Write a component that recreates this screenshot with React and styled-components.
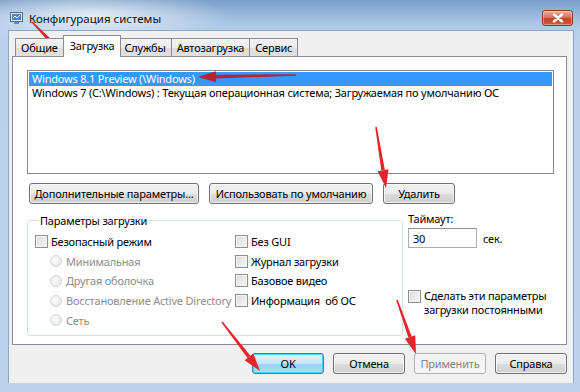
import styled, { createGlobalStyle } from "styled-components"

const GlobalStyle = createGlobalStyle`
    body {
        margin: 0;
        font-family: "Noto Sans", "Open Sans", sans-serif;
        font-size: 11px;
        letter-spacing: -0.2px;
        color: #000;
    }
`

const Window = styled.div`
    position: relative;
    width: 580px;
    height: 392px;
    display: flex;
    flex-direction: column;
    overflow: hidden;
    background:
        radial-gradient(ellipse 140px 26px at 90px 16px, rgba(255, 255, 255, 0.75), rgba(255, 255, 255, 0)),
        linear-gradient(to bottom, #7a9fc9 0, #a9c5e4 22px, #b9d1ea 34px, #bcd3eb 100%);
`

const TitleBar = styled.div`
    height: 30px;
    box-sizing: border-box;
    display: flex;
    align-items: flex-start;
    padding: 11px 7px 0 10px;
    gap: 5px;
`

const Title = styled.div`
    flex: 1;
    font-size: 11.5px;
    letter-spacing: 0;
    line-height: 16px;
    color: #111;
`

const CloseButton = styled.div`
    width: 31px;
    height: 16px;
    margin-top: -1px;
    border: 1px solid #8a3a2c;
    border-radius: 3px;
    box-sizing: border-box;
    display: flex;
    align-items: center;
    justify-content: center;
    background: linear-gradient(to bottom, #eab0a2 0, #d9725e 45%, #c4432c 55%, #cf5a3f 100%);
    box-shadow: inset 0 0 0 1px rgba(255, 255, 255, 0.35);
`

const Client = styled.div`
    flex: 1;
    margin: 0 6px 9px 8px;
    background: #f0f0f0;
    border: 1px solid #8da6c4;
    border-bottom: none;
    padding: 4px 6px 0 3px;
    display: flex;
    flex-direction: column;
`

const TabStrip = styled.div`
    display: flex;
    align-items: flex-end;
    height: 22px;
    padding-left: 3px;
    position: relative;
    z-index: 1;
    margin-bottom: -1px;
`

const Tab = styled.div`
    height: ${p => (p.$active ? "22px" : "19px")};
    padding: 0 ${p => (p.$active ? "6px" : "5px")};
    margin-right: ${p => (p.$active ? "-2px" : "0")};
    margin-left: -1px;
    box-sizing: border-box;
    border: 1px solid #898c95;
    border-bottom: ${p => (p.$active ? "none" : "1px solid #898c95")};
    position: relative;
    z-index: ${p => (p.$active ? 2 : 1)};
    display: flex;
    align-items: ${p => (p.$active ? "flex-start" : "center")};
    padding-top: ${p => (p.$active ? "2px" : "0")};
    background: ${p => (p.$active ? "#fff" : "linear-gradient(to bottom, #f3f3f3, #ebebeb 50%, #dddddd 51%, #e0e0e0)")};
    &:first-child { margin-left: 0; }
`

const TabPanel = styled.div`
    height: 289px;
    box-sizing: border-box;
    border: 1px solid #898c95;
    background: #fff;
    padding: 13px 12px 0 14px;
    display: flex;
    flex-direction: column;
`

const ListBox = styled.div`
    height: 104px;
    box-sizing: border-box;
    border: 1px solid #828790;
    padding: 1px;
`

const ListRow = styled.div`
    height: 14px;
    line-height: 14px;
    padding-left: 3px;
    white-space: nowrap;
    background: ${p => (p.$selected ? "#3399ff" : "transparent")};
    color: ${p => (p.$selected ? "#fff" : "#000")};
`

const ButtonRow = styled.div`
    display: flex;
    gap: 10px;
    margin: 9px 0 0 2px;
`

const Button = styled.div`
    height: 21px;
    width: ${p => p.$w || 72}px;
    box-sizing: border-box;
    display: flex;
    align-items: center;
    justify-content: center;
    border: 1px solid ${p => (p.$focus ? "#3c7fb1" : p.$disabled ? "#adb2b5" : "#707070")};
    border-radius: 3px;
    color: ${p => (p.$disabled ? "#838383" : "#000")};
    white-space: nowrap;
    background: ${p =>
        p.$disabled
            ? "#f4f4f4"
            : p.$focus
            ? "linear-gradient(to bottom, #e5f4fc, #c4e5f6 50%, #98d1ef 51%, #b1dcf3)"
            : "linear-gradient(to bottom, #f2f2f2, #ebebeb 50%, #dddddd 51%, #cfcfcf)"};
    box-shadow: inset 0 0 0 1px ${p => (p.$disabled ? "transparent" : p.$focus ? "#48d2fb" : "rgba(255,255,255,0.7)")};
`

const Options = styled.div`
    display: flex;
    margin-top: 9px;
`

const GroupBox = styled.fieldset`
    width: 376px;
    height: 123px;
    box-sizing: border-box;
    margin: 0;
    padding: 4px 0 0 7px;
    border: 1px solid #d5dfe5;
    border-radius: 3px;
    display: flex;
`

const Legend = styled.legend`
    padding: 0 2px;
    margin-left: 3px;
    line-height: 15px;
`

const Column = styled.div`
    width: ${p => p.$w}px;
    display: flex;
    flex-direction: column;
`

const OptionRow = styled.div`
    height: 19.6px;
    display: flex;
    align-items: center;
    gap: 3px;
    padding-left: ${p => (p.$indent ? "15px" : "0")};
    color: ${p => (p.$disabled ? "#8d8d8d" : "#000")};
    white-space: pre;
`

const Check = styled.span`
    width: 13px;
    height: 13px;
    box-sizing: border-box;
    border: 1px solid #8e8f8f;
    background: linear-gradient(135deg, #dcdcdc, #f6f6f6);
    box-shadow: inset 0 0 0 1px #f4f4f4;
    flex: none;
`

const Radio = styled.span`
    width: 12px;
    height: 12px;
    box-sizing: border-box;
    border-radius: 50%;
    border: 1px solid #d4d4d4;
    background: radial-gradient(circle at 40% 40%, #fbfbfb, #e6e6e6);
    flex: none;
    margin-right: 1px;
`

const RightColumn = styled.div`
    margin-left: 5px;
    display: flex;
    flex-direction: column;
    margin-top: -2px;
`

const TimeoutRow = styled.div`
    display: flex;
    align-items: center;
    gap: 6px;
    margin-top: 2px;
`

const Input = styled.div`
    width: 69px;
    height: 20px;
    box-sizing: border-box;
    border: 1px solid #abadb3;
    border-top-color: #8a8d95;
    padding-left: 4px;
    display: flex;
    align-items: center;
`

const PersistRow = styled.div`
    display: flex;
    align-items: flex-start;
    gap: 3px;
    margin-top: 41px;
    line-height: 14px;
    white-space: nowrap;
    & > span:first-child { margin-top: 1px; }
`

const Footer = styled.div`
    display: flex;
    justify-content: flex-end;
    gap: 9px;
    padding-top: 8px;
`

const Overlay = styled.svg`
    position: absolute;
    left: 0;
    top: 0;
    pointer-events: none;
`

function Arrow({ x1, y1, x2, y2, color = "#e5242a", head = 18, hw = 5.5 }) {
    const dx = x2 - x1
    const dy = y2 - y1
    const len = Math.hypot(dx, dy)
    const ux = dx / len
    const uy = dy / len
    const nx = -uy
    const ny = ux
    const bx = x2 - ux * head
    const by = y2 - uy * head
    const t0 = 0.8
    const t1 = 1.8
    const shaft = [
        [x1 + nx * t0, y1 + ny * t0],
        [bx + nx * t1, by + ny * t1],
        [bx - nx * t1, by - ny * t1],
        [x1 - nx * t0, y1 - ny * t0],
    ]
    const tip = [
        [bx + nx * hw, by + ny * hw],
        [x2, y2],
        [bx - nx * hw, by - ny * hw],
    ]
    const pts = a => a.map(p => p.join(",")).join(" ")
    return (
        <g fill={color}>
            <polygon points={pts(shaft)} />
            <polygon points={pts(tip)} />
        </g>
    )
}

function AppIcon() {
    return (
        <svg width="14" height="14" viewBox="0 0 14 14">
            <rect x="0.5" y="1.5" width="12" height="9" fill="#dfe6ee" stroke="#5a6b80" />
            <rect x="2" y="3" width="9" height="6" fill="#4a86c8" />
            <path d="M3 7 L5 5 L7 7 L10 4" stroke="#fff" strokeWidth="1" fill="none" />
            <rect x="4" y="11" width="5" height="2" fill="#7a8796" />
        </svg>
    )
}

export default function App() {
    return (
        <>
            <GlobalStyle />
            <Window>
                <TitleBar>
                    <AppIcon />
                    <Title>Конфигурация системы</Title>
                    <CloseButton>
                        <svg width="12" height="10" viewBox="0 0 12 10">
                            <path d="M2 1.5 L10 8.5 M10 1.5 L2 8.5" stroke="#fff" strokeWidth="2.4" strokeLinecap="round" />
                        </svg>
                    </CloseButton>
                </TitleBar>
                <Client>
                    <TabStrip>
                        <Tab>Общие</Tab>
                        <Tab $active>Загрузка</Tab>
                        <Tab>Службы</Tab>
                        <Tab>Автозагрузка</Tab>
                        <Tab>Сервис</Tab>
                    </TabStrip>
                    <TabPanel>
                        <ListBox>
                            <ListRow $selected>Windows 8.1 Preview (\Windows)</ListRow>
                            <ListRow>Windows 7 (C:\Windows) : Текущая операционная система; Загружаемая по умолчанию ОС</ListRow>
                        </ListBox>
                        <ButtonRow>
                            <Button $w={170}>Дополнительные параметры...</Button>
                            <Button $w={164}>Использовать по умолчанию</Button>
                            <Button $w={72}>Удалить</Button>
                        </ButtonRow>
                        <Options>
                            <GroupBox>
                                <Legend>Параметры загрузки</Legend>
                                <Column $w={200}>
                                    <OptionRow><Check />Безопасный режим</OptionRow>
                                    <OptionRow $indent $disabled><Radio />Минимальная</OptionRow>
                                    <OptionRow $indent $disabled><Radio />Другая оболочка</OptionRow>
                                    <OptionRow $indent $disabled><Radio />Восстановление Active Directory</OptionRow>
                                    <OptionRow $indent $disabled><Radio />Сеть</OptionRow>
                                </Column>
                                <Column $w={160}>
                                    <OptionRow><Check />Без GUI</OptionRow>
                                    <OptionRow><Check />Журнал загрузки</OptionRow>
                                    <OptionRow><Check />Базовое видео</OptionRow>
                                    <OptionRow><Check />Информация  об ОС</OptionRow>
                                </Column>
                            </GroupBox>
                            <RightColumn>
                                <div>Таймаут:</div>
                                <TimeoutRow>
                                    <Input>30</Input>
                                    <span>сек.</span>
                                </TimeoutRow>
                                <PersistRow>
                                    <Check />
                                    <span>Сделать эти параметры<br />загрузки постоянными</span>
                                </PersistRow>
                            </RightColumn>
                        </Options>
                    </TabPanel>
                    <Footer>
                        <Button $focus>OK</Button>
                        <Button>Отмена</Button>
                        <Button $disabled>Применить</Button>
                        <Button>Справка</Button>
                    </Footer>
                </Client>
                <Overlay width="580" height="392">
                    <Arrow x1={32} y1={22} x2={65} y2={56} />
                    <Arrow x1={296} y1={75} x2={198} y2={77} color="#b8232f" />
                    <Arrow x1={376} y1={127} x2={386} y2={188} />
                    <Arrow x1={222} y1={322} x2={260} y2={371} />
                    <Arrow x1={397} y1={300} x2={416} y2={354} />
                </Overlay>
            </Window>
        </>
    )
}
